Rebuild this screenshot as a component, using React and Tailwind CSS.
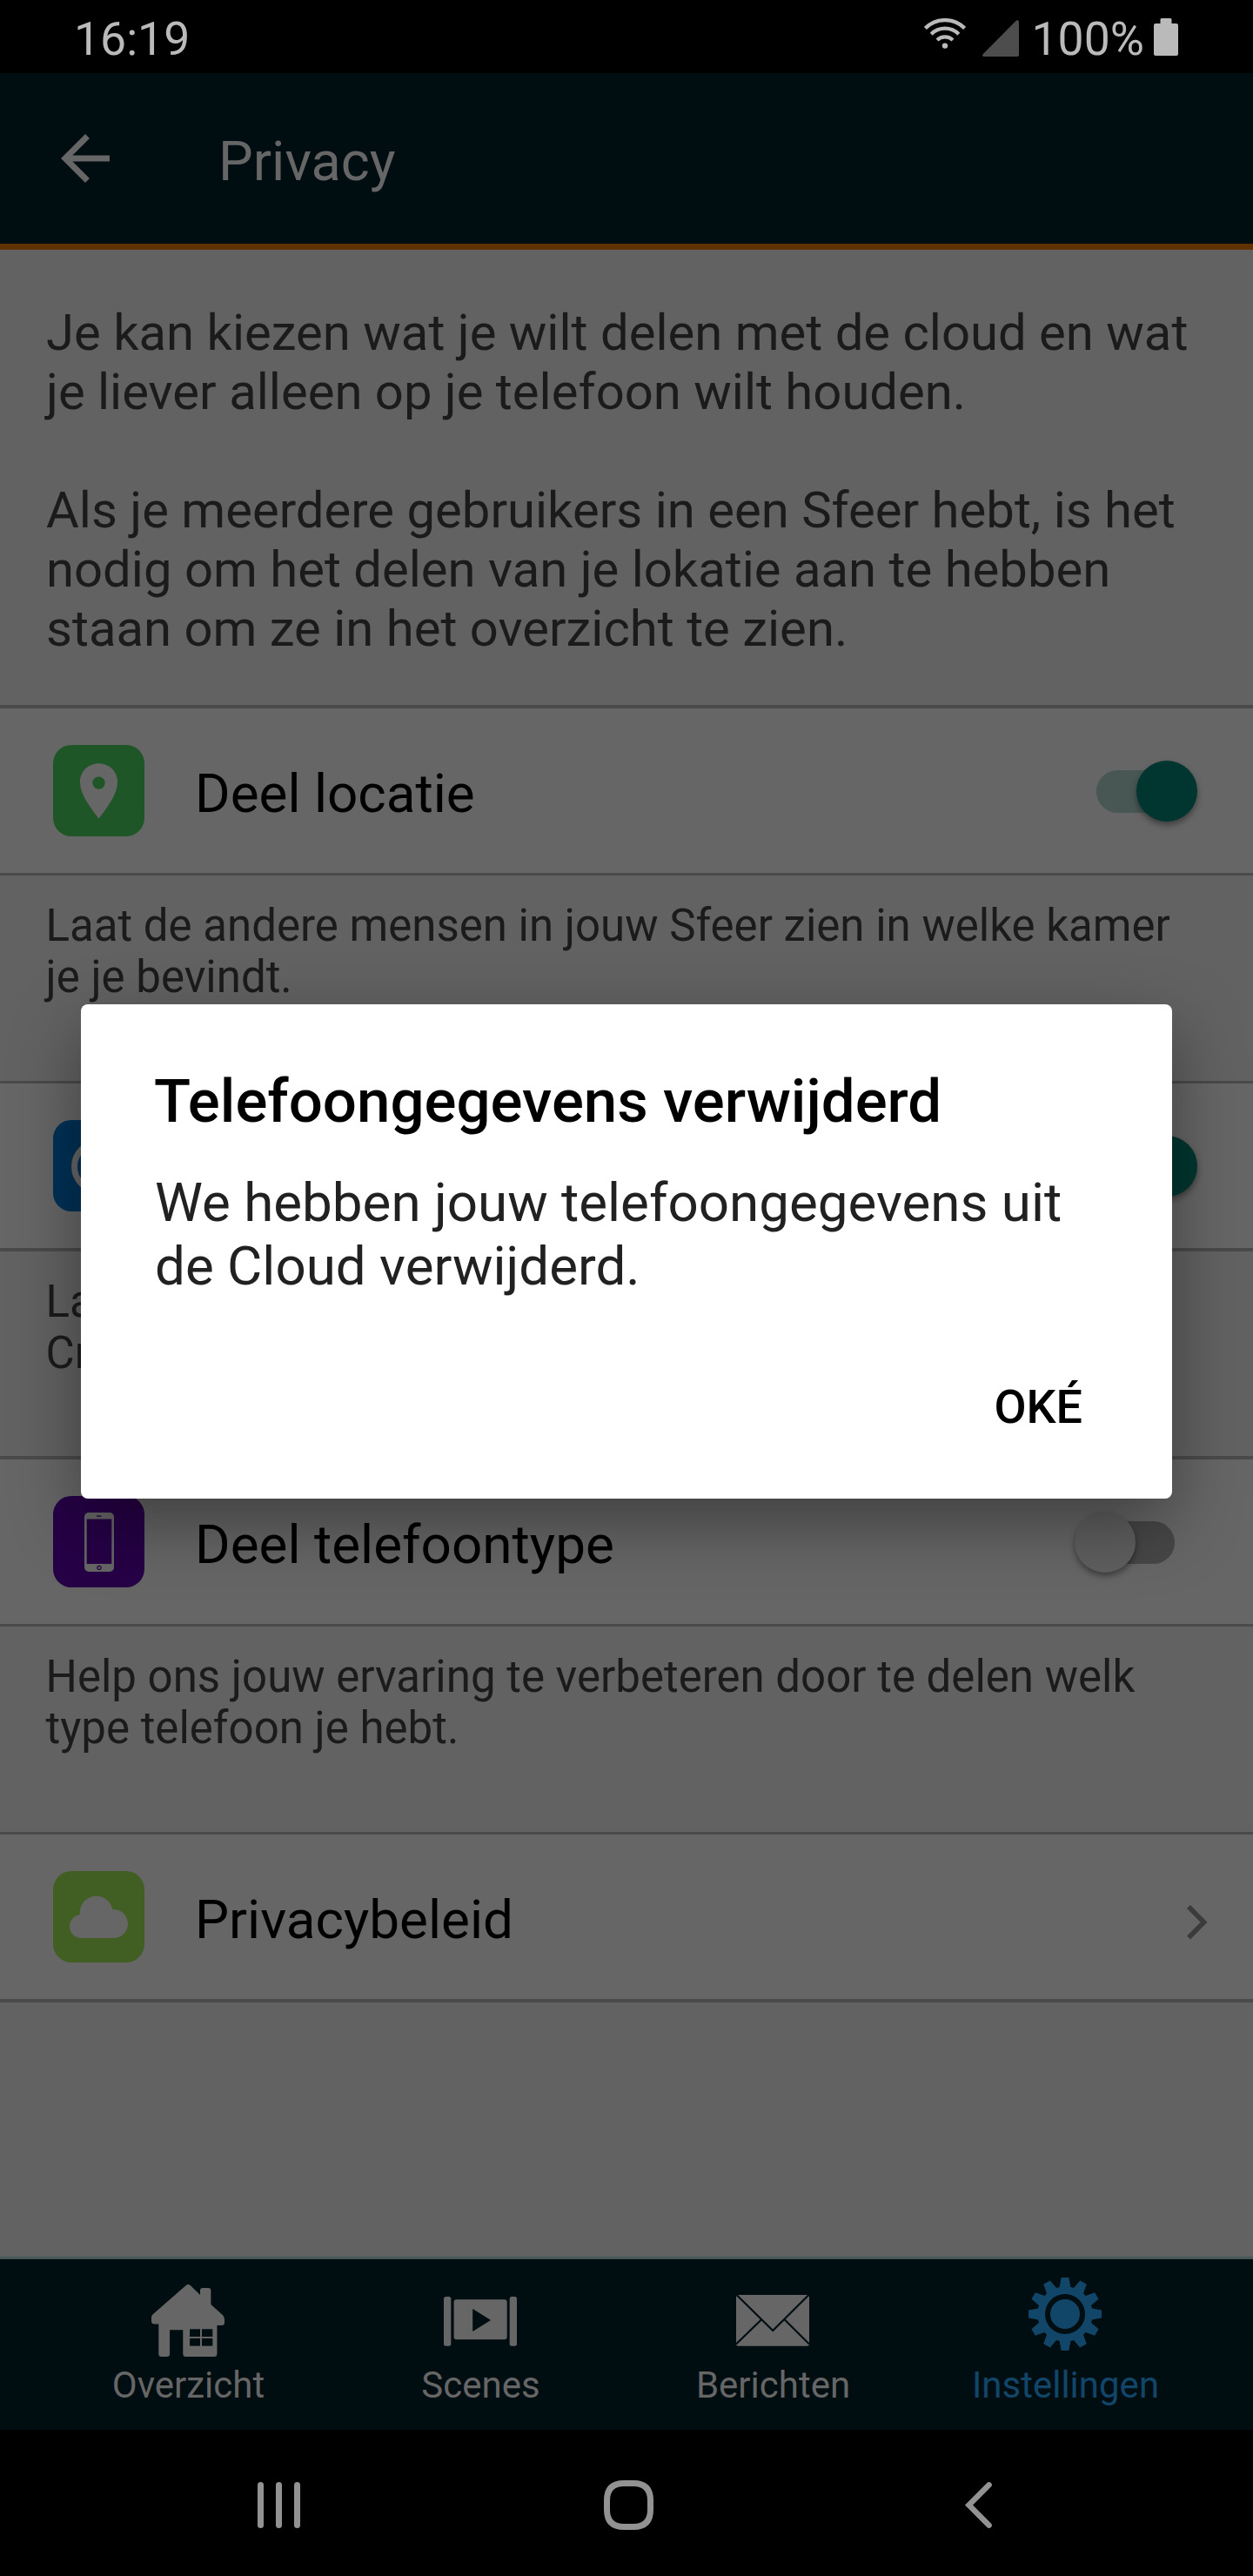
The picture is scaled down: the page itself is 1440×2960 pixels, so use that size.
import React from "react";

/* ---------- status bar ---------- */

function WifiIcon() {
  return (
    <svg width="48" height="36" viewBox="0 0 48 36" fill="none" stroke="#bababa" strokeWidth="4.2">
      <path d="M1.4 11.4a32 32 0 0 1 45.2 0" />
      <path d="M8.2 18.2a22.4 22.4 0 0 1 31.6 0" />
      <path d="M15 25a12.8 12.8 0 0 1 18 0" />
      <circle cx="24" cy="31.6" r="3.2" fill="#bababa" stroke="none" />
    </svg>
  );
}

function StatusBar() {
  return (
    <div className="flex h-[84px] shrink-0 items-start bg-black pl-[85px] pt-[13px] text-[53.5px] leading-[64px] text-[#bababa]">
      <span className="grow">16:19</span>
      <div className="mt-[8px]">
        <WifiIcon />
      </div>
      <svg className="ml-[19px] mt-[10px]" width="42" height="42" viewBox="0 0 42 42">
        <path d="M39 .6Q42-.8 42 2.5V40Q42 42 40 42H2Q-1 42 .8 39Z" fill="#4d4d4d" />
      </svg>
      <span className="ml-[14.5px] w-[129.5px]">100%</span>
      <svg className="ml-[11px] mr-[86px] mt-[8px]" width="28" height="43" viewBox="0 0 28 43" fill="#bababa">
        <path d="M9 0h10q1.5 0 1.5 1.5V6H26q2 0 2 2v33q0 2-2 2H2q-2 0-2-2V8q0-2 2-2h5.5V1.5Q7.5 0 9 0Z" />
      </svg>
    </div>
  );
}

/* ---------- settings rows ---------- */

function Tile({ className, children }) {
  return (
    <div className={"h-[105px] w-[105px] shrink-0 overflow-hidden rounded-[21px] " + className}>
      <svg width="105" height="105" viewBox="0 0 105 105">
        {children}
      </svg>
    </div>
  );
}

function Switch({ on }) {
  return (
    <div className="relative mr-[64px] mt-[60px] flex h-[70px] w-[141px] shrink-0 items-center pl-[25px]">
      <div className={"h-[49px] w-[90px] rounded-full " + (on ? "bg-[#485754]" : "bg-[#474747]")} />
      <div
        className={
          "absolute top-0 h-[70px] w-[70px] rounded-full shadow-[0_4px_7px_rgba(0,0,0,0.4)] " +
          (on ? "right-0 bg-[#00362f]" : "left-0 bg-[#5f5f5f]")
        }
      />
    </div>
  );
}

function Row({ icon, label, trailing, borders = "border-t-[3px] border-b-[4px]" }) {
  return (
    <div className={"flex h-[196px] shrink-0 items-start border-[#4a4a4a] bg-[#666666] pl-[61px] " + borders}>
      <div className="pt-[42px]">{icon}</div>
      <span className="ml-[58px] mt-[62px] grow text-[62px] leading-[72px] text-black">{label}</span>
      {trailing}
    </div>
  );
}

function Note({ lines, className }) {
  return (
    <div className={"shrink-0 pl-[52.5px] pt-[28px] text-[51px] leading-[59px] text-[#1b1b1b] " + className}>
      {lines.map((line) => (
        <div key={line}>{line}</div>
      ))}
    </div>
  );
}

const INTRO = [
  ["Je kan kiezen wat je wilt delen met de cloud en wat", "je liever alleen op je telefoon wilt houden."],
  [
    "Als je meerdere gebruikers in een Sfeer hebt, is het",
    "nodig om het delen van je lokatie aan te hebben",
    "staan om ze in het overzicht te zien.",
  ],
];

function Content() {
  return (
    <main className="flex grow flex-col bg-[#626262]">
      <div className="flex h-[523px] shrink-0 flex-col gap-[68px] pl-[53px] pt-[61px] text-[58px] leading-[68px] text-[#1b1b1b]">
        {INTRO.map((paragraph) => (
          <div key={paragraph[0]}>
            {paragraph.map((line) => (
              <div key={line} className="whitespace-nowrap">
                {line}
              </div>
            ))}
          </div>
        ))}
      </div>

      <Row
        borders="border-t-[4px] border-b-[3px]"
        label="Deel locatie"
        icon={
          <Tile className="bg-[#1f5628]">
            <path
              fill="#666666"
              fillRule="evenodd"
              d="M52.5 21.3C64.4 21.3 74.1 30.5 74.1 42.6C74.1 57 62 72 52.5 84.7C43 72 30.9 57 30.9 42.6C30.9 30.5 40.6 21.3 52.5 21.3ZM52.5 36.4a7.2 7.2 0 1 0 0 14.4a7.2 7.2 0 1 0 0-14.4Z"
            />
          </Tile>
        }
        trailing={<Switch on />}
      />
      <Note className="h-[236px]" lines={["Laat de andere mensen in jouw Sfeer zien in welke kamer", "je je bevindt."]} />

      <Row
        label=""
        icon={
          <Tile className="bg-[#003156]">
            <circle cx="52" cy="53.5" r="27.5" fill="none" stroke="#666666" strokeWidth="7" />
          </Tile>
        }
        trailing={<Switch on />}
      />
      <Note className="h-[235px]" lines={["Laat", "Crownstones"]} />

      <Row
        borders="border-t-[4px] border-b-[3px]"
        label="Deel telefoontype"
        icon={
          <Tile className="bg-[#260046]">
            <rect x="36" y="19" width="34" height="68" rx="5" fill="#666666" />
            <rect x="38.7" y="26.5" width="28.6" height="51.5" fill="#260046" />
            <path d="M50 23.2h5.6" stroke="#260046" strokeWidth="1.2" />
            <circle cx="53" cy="82.4" r="2.1" fill="none" stroke="#260046" strokeWidth="1.2" />
          </Tile>
        }
        trailing={<Switch />}
      />
      <Note className="h-[236px]" lines={["Help ons jouw ervaring te verbeteren door te delen welk", "type telefoon je hebt."]} />

      <Row
        label="Privacybeleid"
        icon={
          <Tile className="bg-[#425f23]">
            <g fill="#666666">
              <circle cx="49.7" cy="47.7" r="19" />
              <circle cx="69.5" cy="60.5" r="16.5" />
              <circle cx="32.5" cy="63.5" r="13.5" />
              <rect x="32.5" y="52" width="37" height="25" />
            </g>
          </Tile>
        }
        trailing={
          <svg className="mr-[52px] mt-[80.5px]" width="24" height="40" viewBox="0 0 24 40">
            <path d="M4 0L23.5 19.8L4 39.6L0 35.6L15.7 19.8L0 4Z" fill="#3b3b3b" />
          </svg>
        }
      />
    </main>
  );
}

/* ---------- tab bar ---------- */

const TOOTH = [
  [-6.4, -31],
  [-4.4, -42],
  [4.4, -42],
  [6.4, -31],
];
const GEAR_POINTS = Array.from({ length: 12 }, (_, i) => {
  const a = (i * Math.PI) / 6;
  return TOOTH.map(([x, y]) => {
    const px = 42 + x * Math.cos(a) - y * Math.sin(a);
    const py = 42 + x * Math.sin(a) + y * Math.cos(a);
    return px.toFixed(2) + "," + py.toFixed(2);
  }).join(" ");
}).join(" ");

const BAR = "#000d11";

const TABS = [
  {
    label: "Overzicht",
    icon: (
      <>
        <path
          fill="#666666"
          d="M39.5 9.2Q42.3 6.8 45 9.2L56 20V15Q56 12 59 12H65.5Q68.4 12 68.4 15V31L82 43.3Q84 45.3 84 48V52Q84 55 81 55H75.5V87.5Q75.5 91 72 91H39.5Q36.3 91 36.3 87.5V60.3H21.1V87.5Q21.1 91 17.8 91H11.6Q8.3 91 8.3 87.5V53.5H3.5Q0 53.5 0 50V46Q0 43.5 2 42Z"
        />
        <g fill={BAR}>
          <rect x="44.1" y="59.3" width="11.9" height="8.7" />
          <rect x="58" y="59.3" width="12.3" height="8.7" />
          <rect x="44.1" y="69.9" width="11.9" height="8.7" />
          <rect x="58" y="69.9" width="12.3" height="8.7" />
        </g>
      </>
    ),
  },
  {
    label: "Scenes",
    icon: (
      <g fill="#666666">
        <rect x="0" y="22" width="8.3" height="56.7" rx="2.5" />
        <rect x="75.7" y="22" width="8.3" height="56.7" rx="2.5" />
        <path
          fillRule="evenodd"
          d="M14.6 25.3H69.7Q72.7 25.3 72.7 28.3V68Q72.7 71.2 69.7 71.2H14.6Q11.6 71.2 11.6 68V28.3Q11.6 25.3 14.6 25.3ZM33.2 36L54 49L33.2 62Z"
        />
      </g>
    ),
  },
  {
    label: "Berichten",
    icon: (
      <>
        <rect x="0" y="20" width="84" height="58.7" rx="2.5" fill="#666666" />
        <path
          d="M0 19.5L42.2 61L84 19.5M28.9 48.5L0 76.5M55.8 48.5L84 76.5"
          fill="none"
          stroke={BAR}
          strokeWidth="2.2"
        />
      </>
    ),
  },
  {
    label: "Instellingen",
    active: true,
    icon: (
      <>
        <polygon points={GEAR_POINTS} fill="#114669" />
        <circle cx="42" cy="42" r="20" fill="none" stroke={BAR} strokeWidth="6" />
      </>
    ),
  },
];

function TabBar() {
  return (
    <nav className="flex h-[199px] shrink-0 border-t-[3px] border-[#485857] bg-[#000d11] px-[48px]">
      {TABS.map((tab) => (
        <div key={tab.label} className="flex w-[336px] flex-col items-center pt-[21px]">
          <svg width="84" height="91" viewBox="0 0 84 91">
            {tab.icon}
          </svg>
          <span
            className={"mt-[8px] pl-px text-[42px] leading-[50px] " + (tab.active ? "text-[#114669]" : "text-[#666666]")}
          >
            {tab.label}
          </span>
        </div>
      ))}
    </nav>
  );
}

function SystemNav() {
  return (
    <div className="flex h-[168px] shrink-0 items-start bg-black pt-[58px]">
      <svg className="ml-[296px] mt-[2px]" width="49" height="53" viewBox="0 0 49 53" fill="#929292">
        <rect x="0" width="7" height="53" rx="3.5" />
        <rect x="21" width="7" height="53" rx="3.5" />
        <rect x="42" width="7" height="53" rx="3.5" />
      </svg>
      <svg className="ml-[349px]" width="57" height="57" viewBox="0 0 57 57" fill="none">
        <path
          d="M28.5 3.5H34C47 3.5 53.5 10 53.5 23V34C53.5 47 47 53.5 34 53.5H23C10 53.5 3.5 47 3.5 34V23C3.5 10 10 3.5 23 3.5Z"
          stroke="#929292"
          strokeWidth="7"
        />
      </svg>
      <svg className="ml-[357px] mt-[2px]" width="33" height="53" viewBox="0 0 33 53" fill="none">
        <path d="M28.6 3.3L5.5 26.5L28.6 49.7" stroke="#929292" strokeWidth="6.5" strokeLinecap="round" />
      </svg>
    </div>
  );
}

/* ---------- dialog ---------- */

function Dialog() {
  return (
    <div className="absolute inset-0 flex items-center justify-center">
      <div
        role="dialog"
        className="flex h-[568px] w-[1254px] flex-col rounded-[8px] bg-white px-[84px] pt-[71px] shadow-[0_28px_80px_rgba(0,0,0,0.38)]"
      >
        <h2 className="text-[69px] font-medium leading-[82px] text-black">Telefoongegevens verwijderd</h2>
        <p className="mt-[39px] pl-px text-[61.9px] leading-[73px] text-[#212121]">
          We hebben jouw telefoongegevens uit
          <br />
          de Cloud verwijderd.
        </p>
        <button className="mr-[19px] mt-[93px] self-end text-[53.9px] font-medium leading-[64px] text-black">
          OKÉ
        </button>
      </div>
    </div>
  );
}

export default function App() {
  return (
    <div className="flex h-[2960px] w-[1440px] flex-col overflow-hidden bg-black font-[Roboto,sans-serif]">
      <StatusBar />
      <div className="relative flex h-[2708px] shrink-0 flex-col overflow-hidden">
        <header className="flex h-[203px] shrink-0 items-start border-b-[7px] border-[#5f3200] bg-[#000d11] pl-[56px]">
          <svg className="mt-[56px]" width="84" height="84" viewBox="0 0 24 24">
            <path d="M20 11H7.83l5.59-5.59L12 4l-8 8 8 8 1.41-1.41L7.83 13H20v-2z" fill="#666666" />
          </svg>
          <h1 className="ml-[111px] mt-[65px] text-[63px] leading-[74px] text-[#666666]">Privacy</h1>
        </header>
        <Content />
        <TabBar />
        <Dialog />
      </div>
      <SystemNav />
    </div>
  );
}
